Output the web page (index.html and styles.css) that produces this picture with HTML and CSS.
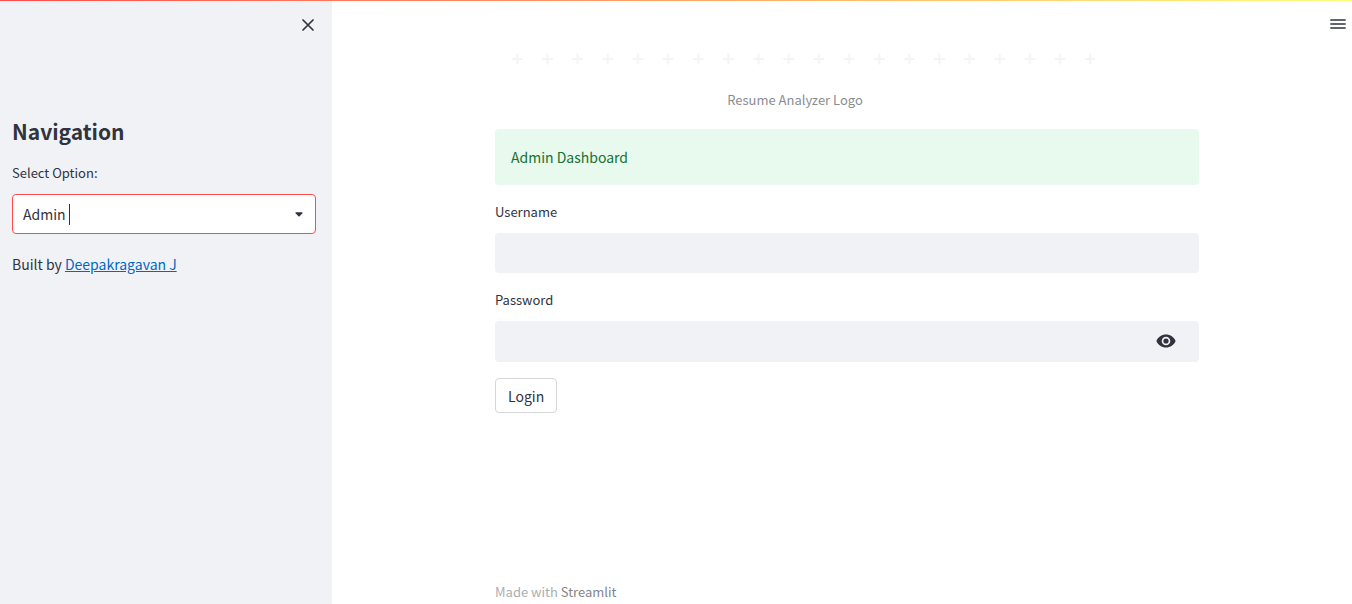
FILE: index.html
```html
<!DOCTYPE html>
<html lang="en">
<head>
<meta charset="utf-8">
<meta name="viewport" content="width=device-width, initial-scale=1">
<title>Resume Analyzer</title>
<link rel="stylesheet" href="styles.css">
</head>
<body>
<div class="decoration"></div>
<div class="app">
  <aside class="sidebar">
    <div class="sidebar-top">
      <button class="icon-button" type="button" aria-label="Close sidebar">
        <svg width="16" height="16" viewBox="0 0 16 16" fill="none" stroke="currentColor" stroke-width="1.7" stroke-linecap="round"><path d="M3 3l10 10M13 3L3 13"/></svg>
      </button>
    </div>
    <h2 class="title">Navigation</h2>
    <label class="label" for="option">Select Option:</label>
    <div class="select-box">
      <select class="select" id="option"><option>Admin</option><option>User</option></select>
      <span class="caret"></span>
      <svg class="arrow" width="8" height="5" viewBox="0 0 8 5" fill="currentColor"><path d="M0.8 0.3h6.4Q7.9 0.7 7.4 1.3L4.6 4.2Q4 4.7 3.4 4.2L0.6 1.3Q0.1 0.7 0.8 0.3z"/></svg>
    </div>
    <p class="credit">Built by <a href="#">Deepakragavan J</a></p>
  </aside>
  <main class="main">
    <button class="icon-button menu" type="button" aria-label="Menu">
      <svg width="16" height="12" viewBox="0 0 16 12" fill="currentColor"><path d="M0.3 1.2h15.4v1.6H0.3zM0.3 5.2h15.4v1.6H0.3zM0.3 9.2h15.4v1.6H0.3z"/></svg>
    </button>
    <div class="content">
      <figure class="logo">
        <svg class="logo-image" width="600" height="20" viewBox="0 0 600 20" role="img" aria-label="Resume Analyzer Logo">
          <defs>
            <pattern id="plus" x="7.4" y="0" width="30.15" height="20" patternUnits="userSpaceOnUse"><path d="M15 4.5v11M9.5 10h11" stroke="#f4f4f4" stroke-width="2"/></pattern>
          </defs>
          <rect x="8" width="602" height="20" fill="url(#plus)"/>
        </svg>
        <figcaption class="caption">Resume Analyzer Logo</figcaption>
      </figure>
      <div class="alert" role="status">Admin Dashboard</div>
      <label class="label" for="username">Username</label>
      <input class="input" id="username" type="text">
      <label class="label" for="password">Password</label>
      <div class="password">
        <input class="input" id="password" type="password">
        <button class="icon-button eye" type="button" aria-label="Show password">
          <svg width="20" height="14" viewBox="0 0 20 14"><path fill="currentColor" fill-rule="evenodd" d="M10 0.5C5.7 0.5 2 3 0.4 7 2 11 5.7 13.5 10 13.5S18 11 19.6 7C18 3 14.3 0.5 10 0.5zm0 10.8a4.3 4.3 0 1 1 0-8.6 4.3 4.3 0 0 1 0 8.6zm0-6.9a2.6 2.6 0 1 0 0 5.2 2.6 2.6 0 0 0 0-5.2z"/></svg>
        </button>
      </div>
      <button class="login" type="button">Login</button>
    </div>
    <footer class="footer">Made with <a href="#">Streamlit</a></footer>
  </main>
</div>
</body>
</html>
```
FILE: styles.css
```css
* { box-sizing: border-box; }
body {
  margin: 0;
  background: #fff;
  color: #31333f;
  font: 400 14px/24px "Noto Sans CJK JP", "Noto Sans", sans-serif;
}
button, input, select { font: inherit; color: inherit; margin: 0; }
svg { display: block; }
.decoration {
  position: fixed;
  inset: 0 0 auto;
  height: 1px;
  background: linear-gradient(90deg, #ff4b4b, #fffd80);
  z-index: 1;
}
.app { display: flex; min-height: 100vh; }
.sidebar { width: 332px; flex: none; padding: 13px 12px 16px; background: #f0f2f6; }
.sidebar-top { display: flex; justify-content: flex-end; height: 103px; }
.icon-button { display: block; padding: 4px; height: 24px; border: 0; background: none; cursor: pointer; }
.title { margin: 0 0 16px; font-size: 21px; line-height: 30px; font-weight: 700; }
.label { display: block; margin-bottom: 10px; font-size: 13px; line-height: 22px; }
.select-box { position: relative; margin: 0 4px 18px 0; }
.select {
  display: block;
  width: 100%;
  height: 40px;
  padding: 0 10px;
  border: 1px solid #ff4b4b;
  border-radius: 4px;
  outline: 0;
  background: #fff;
  appearance: none;
}
.caret { position: absolute; left: 57px; top: 10px; width: 1px; height: 21px; background: #31333f; }
.arrow { position: absolute; right: 13px; top: 18px; pointer-events: none; }
.credit { margin: 0; }
.credit a { color: #0068c9; }
.main { position: relative; flex: 1; min-width: 0; display: flex; flex-direction: column; padding: 49px 16px 0 26px; }
.menu { position: absolute; right: 2px; top: 12px; }
.content, .footer { width: 100%; max-width: 704px; margin: 0 auto; }
.content { flex: 1; }
.logo { max-width: 600px; margin: 0 0 18px; }
.logo-image { max-width: 100%; }
.caption { margin-top: 20px; color: #8b8c93; font-size: 13px; line-height: 22px; text-align: center; }
.alert { padding: 16px; margin-bottom: 16px; border-radius: 4px; background: #e8f9ee; color: #177233; }
.input { display: block; width: 100%; height: 40px; margin-bottom: 16px; padding: 8px; border: 0; border-radius: 4px; background: #f0f2f6; }
.password { position: relative; }
.password .input { height: 41px; }
.eye { position: absolute; right: 19px; top: 8px; }
.login { display: block; height: 35px; padding: 0 12px; border: 1px solid #d6d6d9; border-radius: 4px; background: #fff; cursor: pointer; }
.footer { color: #adadb2; font-size: 13px; line-height: 24px; }
.footer a { color: #838489; text-decoration: none; }
```
